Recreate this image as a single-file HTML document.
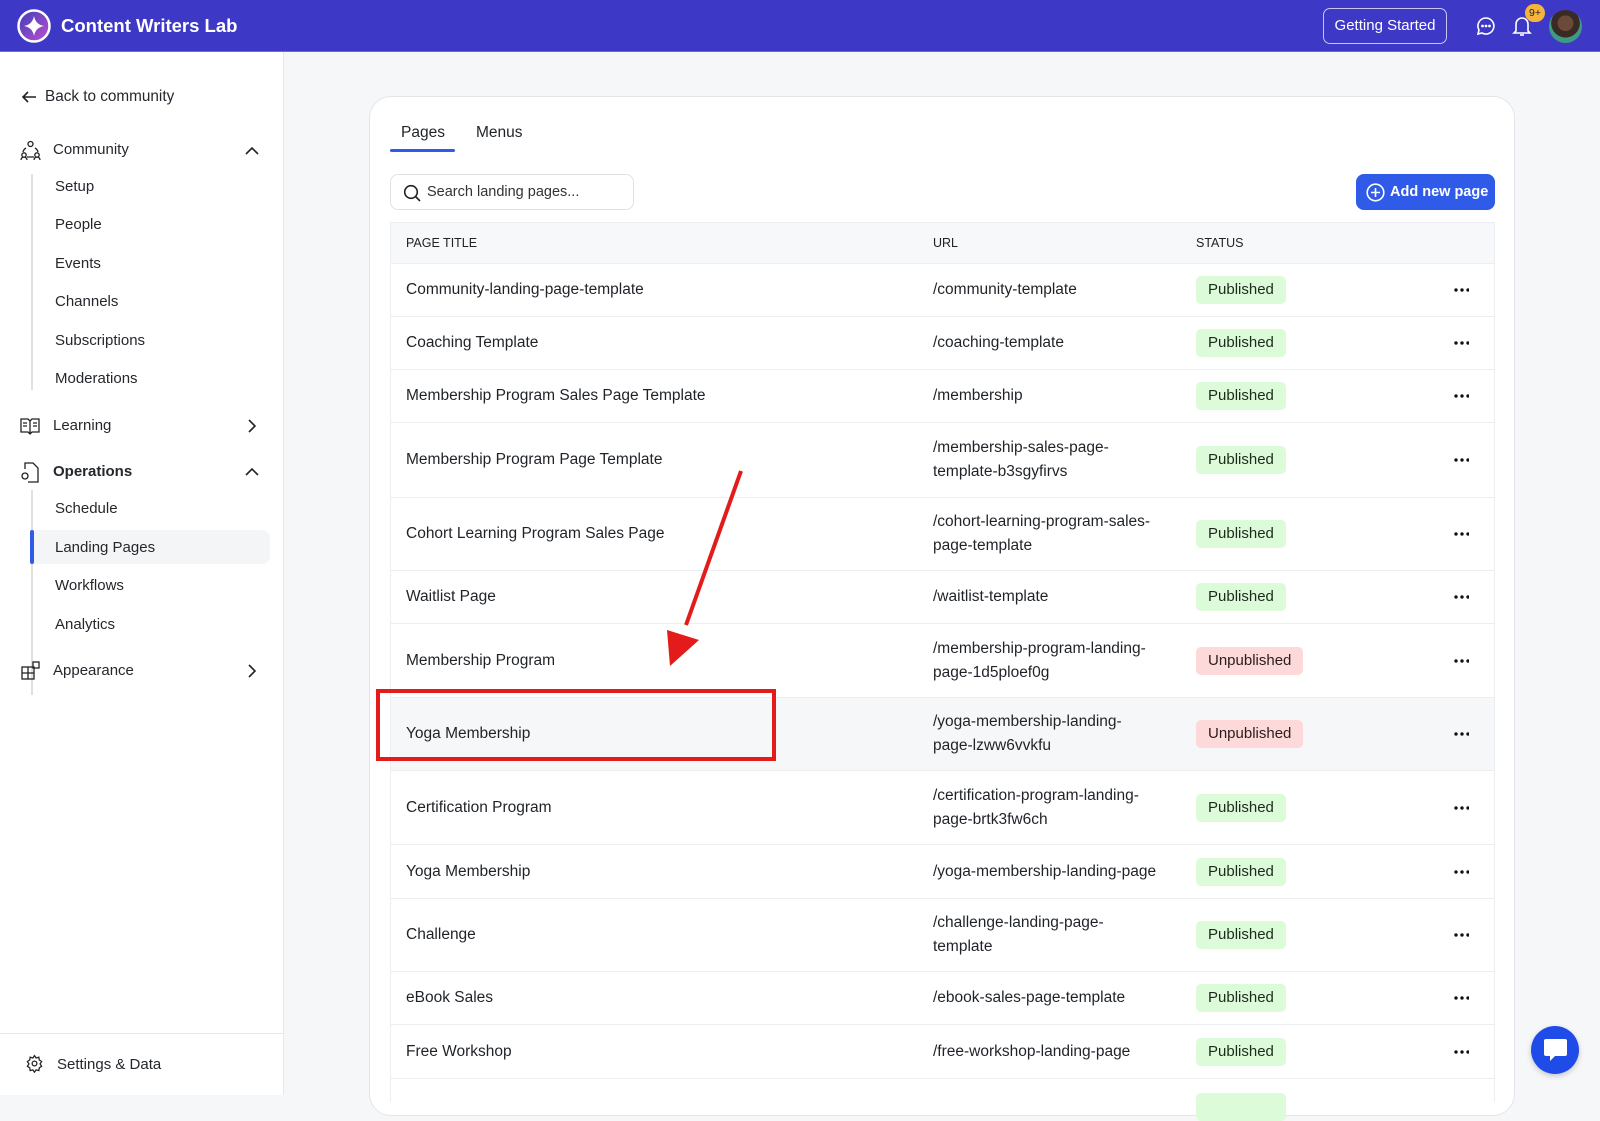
<!DOCTYPE html>
<html><head><meta charset="utf-8"><style>
*{box-sizing:border-box;margin:0;padding:0}
body{width:1600px;height:1095px;overflow:hidden;background:#f6f7f9;font-family:"Liberation Sans",sans-serif;color:#1f2328;position:relative;font-size:14.5px}
.a{position:absolute}
.hdr{left:0;top:0;width:1600px;height:52px;background:#3e38c6;border-bottom:1px solid #6c68d8}
.side{left:0;top:52px;width:284px;height:1043px;background:#fff;border-right:1px solid #e6e7ea}
.si{position:absolute;left:55px;font-size:15px;color:#24272c}
.card{left:369px;top:96px;width:1146px;height:1020px;background:#fff;border:1px solid #e3e5e9;border-radius:22px}
.tbl{left:390px;top:222px;width:1105px;height:880px;border:1px solid #eceef1;border-bottom:none;font-size:15.5px}
.row{position:absolute;left:0;width:1103px;border-top:1px solid #eceef1}
.row .t{position:absolute;left:15px;top:50%;transform:translateY(-50%)}
.row .u{position:absolute;left:542px;top:50%;transform:translateY(-50%);line-height:24px;width:232px}
.badge{position:absolute;left:805px;top:50%;transform:translateY(-50%);height:28px;line-height:28px;padding:0 12px;border-radius:5px;background:#dcfbd9;color:#1d2a1d;font-size:15px}
.badge.un{background:#fdd9d9;color:#2a1d1d}
.dots{position:absolute;left:1062px;top:50%;margin-top:-2px;width:16px;height:4px;background:radial-gradient(circle,#111 1.6px,transparent 1.9px) 0 0/6px 4px repeat-x}
</style></head><body>
<div class="a hdr">
 <svg class="a" style="left:17px;top:9px" width="34" height="34" viewBox="0 0 34 34"><defs><linearGradient id="g" x1="0" y1="0" x2="1" y2="1"><stop offset="0" stop-color="#3b3fb8"/><stop offset="1" stop-color="#c04fd0"/></linearGradient></defs><circle cx="17" cy="17" r="15.5" fill="url(#g)" stroke="#fff" stroke-width="2.5"/><path d="M17 7 Q18.5 15.5 27 17 Q18.5 18.5 17 27 Q15.5 18.5 7 17 Q15.5 15.5 17 7Z" fill="#fff"/></svg>
 <div class="a" style="left:61px;top:15px;color:#fff;font-weight:bold;font-size:18.5px">Content Writers Lab</div>
 <div class="a" style="left:1323px;top:8px;width:124px;height:36px;border:1px solid #c8c6f0;border-radius:7px;color:#fff;font-size:15px;text-align:center;line-height:34px">Getting Started</div>
 <svg class="a" style="left:1476px;top:16px" width="20" height="20" viewBox="0 0 20 20" fill="none" stroke="#fff" stroke-width="1.6"><path d="M10 2a8 8 0 1 1-4 15l-4 1 1-4A8 8 0 0 1 10 2z"/><circle cx="6.5" cy="10" r=".6" fill="#fff"/><circle cx="10" cy="10" r=".6" fill="#fff"/><circle cx="13.5" cy="10" r=".6" fill="#fff"/></svg>
 <svg class="a" style="left:1512px;top:15px" width="20" height="22" viewBox="0 0 20 22" fill="none" stroke="#fff" stroke-width="1.6"><path d="M4 16V9a6 6 0 0 1 12 0v7l2 2H2z"/><path d="M8 20h4"/></svg>
 <div class="a" style="left:1525px;top:4px;width:20px;height:18px;border-radius:9px;background:#f5b53d;color:#222;font-size:10.5px;text-align:center;line-height:18px">9+</div>
 <div class="a" style="left:1549px;top:10px;width:33px;height:33px;border-radius:50%;background:radial-gradient(circle at 50% 40%,#6b4a3a 0 30%,#3a2a24 31% 55%,#3f9a84 56%)"></div>
</div>
<div class="a side">
 <svg class="a" style="left:21px;top:37px" width="16" height="16" viewBox="0 0 16 16" fill="none" stroke="#222" stroke-width="1.6"><path d="M15 8H2M7 3L2 8l5 5"/></svg>
 <div class="si" style="left:45px;top:36px;font-size:15.3px">Back to community</div>
 <svg class="a" style="left:20px;top:88px" width="21" height="21" viewBox="0 0 21 21" fill="none" stroke="#222" stroke-width="1.3"><circle cx="10.5" cy="4" r="2.5"/><circle cx="4" cy="15" r="2.2"/><circle cx="17" cy="15" r="2.2"/><path d="M6 8a6 6 0 0 0-3 4M15 8a6 6 0 0 1 3 4M1 20a3 3 0 0 1 6 0M14 20a3 3 0 0 1 6 0M7 17h7"/></svg>
 <div class="si" style="left:53px;top:89px">Community</div>
 <svg class="a" style="left:245px;top:94px" width="14" height="9" viewBox="0 0 14 9" fill="none" stroke="#222" stroke-width="1.6"><path d="M1 8l6-6 6 6"/></svg>
 <div class="a" style="left:31px;top:122px;width:2px;height:216px;background:#e0e0e3"></div>
 <div class="si" style="top:126px">Setup</div>
 <div class="si" style="top:164px">People</div>
 <div class="si" style="top:203px">Events</div>
 <div class="si" style="top:241px">Channels</div>
 <div class="si" style="top:280px">Subscriptions</div>
 <div class="si" style="top:318px">Moderations</div>
 <svg class="a" style="left:20px;top:365px" width="20" height="18" viewBox="0 0 20 18" fill="none" stroke="#222" stroke-width="1.3"><path d="M1 2h7l2 2 2-2h7v13h-7l-2 2-2-2H1z M10 4v13M3 6h4M3 9h4M13 6h4M13 9h4"/></svg>
 <div class="si" style="left:53px;top:365px">Learning</div>
 <svg class="a" style="left:248px;top:367px" width="9" height="14" viewBox="0 0 9 14" fill="none" stroke="#222" stroke-width="1.6"><path d="M1 1l6 6-6 6"/></svg>
 <svg class="a" style="left:20px;top:410px" width="19" height="21" viewBox="0 0 19 21" fill="none" stroke="#222" stroke-width="1.3"><path d="M5 7V1h8l5 5v14H8"/><circle cx="5" cy="14" r="3"/></svg>
 <div class="si" style="left:53px;top:411px;font-weight:bold">Operations</div>
 <svg class="a" style="left:245px;top:467px;top:415px" width="14" height="9" viewBox="0 0 14 9" fill="none" stroke="#222" stroke-width="1.6"><path d="M1 8l6-6 6 6"/></svg>
 <div class="a" style="left:31px;top:438px;width:2px;height:205px;background:#e0e0e3"></div>
 <div class="si" style="top:448px">Schedule</div>
 <div class="a" style="left:32px;top:478px;width:238px;height:34px;background:#f4f5f7;border-radius:0 8px 8px 0"></div>
 <div class="a" style="left:30px;top:478px;width:4px;height:34px;background:#2f5be8;border-radius:2px"></div>
 <div class="si" style="top:487px">Landing Pages</div>
 <div class="si" style="top:525px">Workflows</div>
 <div class="si" style="top:564px">Analytics</div>
 <svg class="a" style="left:21px;top:609px" width="19" height="19" viewBox="0 0 19 19" fill="none" stroke="#222" stroke-width="1.3"><rect x="1" y="6" width="12" height="12"/><path d="M7 6v12M1 12h12"/><rect x="12" y="1" width="6" height="6"/></svg>
 <div class="si" style="left:53px;top:610px">Appearance</div>
 <svg class="a" style="left:248px;top:612px" width="9" height="14" viewBox="0 0 9 14" fill="none" stroke="#222" stroke-width="1.6"><path d="M1 1l6 6-6 6"/></svg>
 <div class="a" style="left:0;top:981px;width:284px;height:1px;background:#e6e7ea"></div>
 <svg class="a" style="left:25px;top:1002px" width="19" height="19" viewBox="0 0 24 24" fill="none" stroke="#222" stroke-width="1.6"><circle cx="12" cy="12" r="3"/><path d="M12 2l2 3 3.5-1 .5 3.5 3 2-2 3 2 3-3 2-.5 3.5-3.5-1-2 3-2-3-3.5 1-.5-3.5-3-2 2-3-2-3 3-2 .5-3.5 3.5 1z"/></svg>
 <div class="si" style="left:57px;top:1004px">Settings &amp; Data</div>
</div>
<div class="a card"></div>
<div class="a" style="left:401px;top:124px;font-size:15.5px">Pages</div>
<div class="a" style="left:476px;top:124px;font-size:15.5px">Menus</div>
<div class="a" style="left:390px;top:149px;width:65px;height:3px;background:#2f5be8;border-radius:2px"></div>
<div class="a" style="left:390px;top:174px;width:244px;height:36px;border:1px solid #dfe1e5;border-radius:8px"></div>
<svg class="a" style="left:403px;top:184px" width="18" height="18" viewBox="0 0 18 18" fill="none" stroke="#222" stroke-width="1.6"><circle cx="8" cy="8" r="6.3"/><path d="M12.5 12.5L17 17"/></svg>
<div class="a" style="left:427px;top:184px;font-size:14.5px;color:#333">Search landing pages...</div>
<div class="a" style="left:1356px;top:174px;width:139px;height:36px;background:#2f5be8;border-radius:8px;color:#fff;font-weight:bold;font-size:14.5px;line-height:36px;padding-left:34px">Add new page</div>
<svg class="a" style="left:1366px;top:183px" width="19" height="19" viewBox="0 0 19 19" fill="none" stroke="#fff" stroke-width="1.6"><circle cx="9.5" cy="9.5" r="8.3"/><path d="M9.5 5v9M5 9.5h9"/></svg>
<div class="a tbl">
 <div class="a" style="left:0;top:0;width:1103px;height:40px;background:#f7f8fa;font-size:12.5px;color:#222">
  <span class="a" style="left:15px;top:13px">PAGE TITLE</span><span class="a" style="left:542px;top:13px">URL</span><span class="a" style="left:805px;top:13px">STATUS</span></div>
 <div class="row" style="top:40px;height:53px"><span class="t">Community-landing-page-template</span><span class="u">/community-template</span><span class="badge">Published</span><span class="dots"></span></div>
 <div class="row" style="top:93px;height:53px"><span class="t">Coaching Template</span><span class="u">/coaching-template</span><span class="badge">Published</span><span class="dots"></span></div>
 <div class="row" style="top:146px;height:53px"><span class="t">Membership Program Sales Page Template</span><span class="u">/membership</span><span class="badge">Published</span><span class="dots"></span></div>
 <div class="row" style="top:199px;height:75px"><span class="t">Membership Program Page Template</span><span class="u">/membership-sales-page-<br>template-b3sgyfirvs</span><span class="badge">Published</span><span class="dots"></span></div>
 <div class="row" style="top:274px;height:73px"><span class="t">Cohort Learning Program Sales Page</span><span class="u">/cohort-learning-program-sales-<br>page-template</span><span class="badge">Published</span><span class="dots"></span></div>
 <div class="row" style="top:347px;height:53px"><span class="t">Waitlist Page</span><span class="u">/waitlist-template</span><span class="badge">Published</span><span class="dots"></span></div>
 <div class="row" style="top:400px;height:74px"><span class="t">Membership Program</span><span class="u">/membership-program-landing-<br>page-1d5ploef0g</span><span class="badge un">Unpublished</span><span class="dots"></span></div>
 <div class="row" style="top:474px;height:73px;background:#f6f7f9"><span class="t">Yoga Membership</span><span class="u">/yoga-membership-landing-<br>page-lzww6vvkfu</span><span class="badge un">Unpublished</span><span class="dots"></span></div>
 <div class="row" style="top:547px;height:74px"><span class="t">Certification Program</span><span class="u">/certification-program-landing-<br>page-brtk3fw6ch</span><span class="badge">Published</span><span class="dots"></span></div>
 <div class="row" style="top:621px;height:54px"><span class="t">Yoga Membership</span><span class="u" style="width:260px">/yoga-membership-landing-page</span><span class="badge">Published</span><span class="dots"></span></div>
 <div class="row" style="top:675px;height:73px"><span class="t">Challenge</span><span class="u">/challenge-landing-page-<br>template</span><span class="badge">Published</span><span class="dots"></span></div>
 <div class="row" style="top:748px;height:53px"><span class="t">eBook Sales</span><span class="u" style="width:260px">/ebook-sales-page-template</span><span class="badge">Published</span><span class="dots"></span></div>
 <div class="row" style="top:801px;height:54px"><span class="t">Free Workshop</span><span class="u" style="width:260px">/free-workshop-landing-page</span><span class="badge">Published</span><span class="dots"></span></div>
 <div class="row" style="top:855px;height:40px"><span class="badge" style="top:28px;color:transparent">Published</span></div>
</div>
<div class="a" style="left:376px;top:689px;width:400px;height:72px;border:4px solid #e31b1b"></div>
<svg class="a" style="left:0;top:0" width="1600" height="1095"><line x1="741" y1="471" x2="686" y2="625" stroke="#e31b1b" stroke-width="4"/><polygon points="670,666 667,630 699,640" fill="#e31b1b"/></svg>
<div class="a" style="left:1531px;top:1026px;width:48px;height:48px;border-radius:50%;background:#1f4be8;box-shadow:0 2px 6px rgba(0,0,0,.2)"></div>
<svg class="a" style="left:1543px;top:1038px" width="25" height="25" viewBox="0 0 25 25"><path d="M3 1h19a2 2 0 0 1 2 2v13a2 2 0 0 1-2 2H12l-5 5v-5H3a2 2 0 0 1-2-2V3a2 2 0 0 1 2-2z" fill="#fff"/></svg>
</body></html>
